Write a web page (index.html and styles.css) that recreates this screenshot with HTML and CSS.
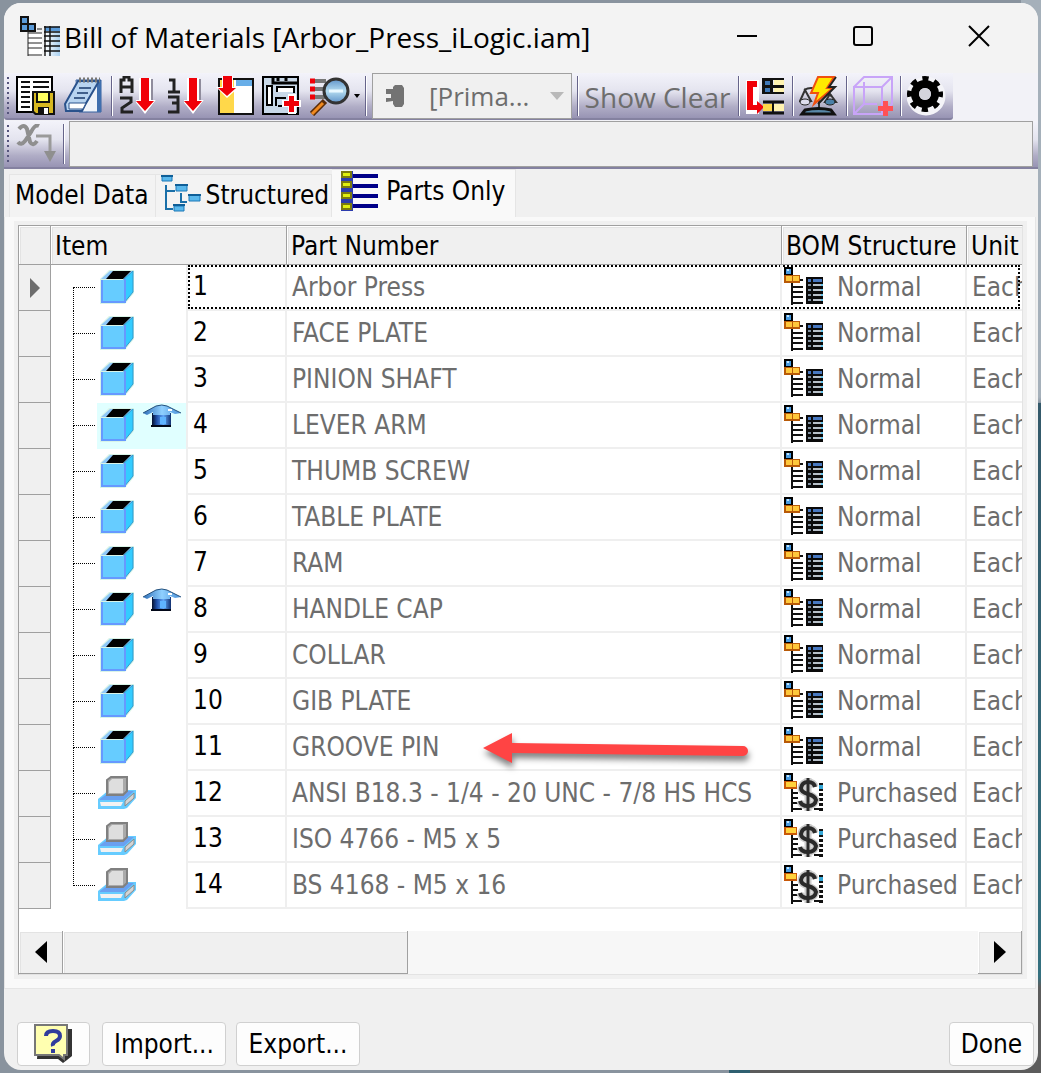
FILE: index.html
```html
<!DOCTYPE html>
<html lang="en">
<head>
<meta charset="utf-8">
<title>Bill of Materials</title>
<link rel="stylesheet" href="styles.css">
</head>
<body>
<svg class="defs" aria-hidden="true">
  <defs>
    <linearGradient id="lens" x1="0" y1="0" x2="0" y2="1"><stop offset="0" stop-color="#5f93c9"/><stop offset=".5" stop-color="#b4dcf0"/><stop offset="1" stop-color="#5f93c9"/></linearGradient>
    <linearGradient id="roof"><stop offset="0" stop-color="#2f6fb8"/><stop offset=".5" stop-color="#8fd0ff"/><stop offset="1" stop-color="#4a90d8"/></linearGradient>
    <linearGradient id="wall"><stop offset="0" stop-color="#06102c"/><stop offset=".25" stop-color="#1f4fa8"/><stop offset=".6" stop-color="#62a8f8"/><stop offset="1" stop-color="#123070"/></linearGradient>
    <linearGradient id="sheet"><stop offset="0" stop-color="#ffffff"/><stop offset="1" stop-color="#a9d0f0"/></linearGradient>
  </defs>
  <symbol id="cube" viewBox="0 0 40 40">
    <path d="M3 12 12 3H37V26L28 37H3Z" fill="#d8f4e8"/>
    <path d="M4 12 13 4H36L27 12Z" fill="#8fc8f8"/>
    <path d="M9 12 16 4H34L26 12Z" fill="#000"/>
    <path d="M27 12 36 4V25L27 36Z" fill="#33ccff" stroke="#3399cc"/>
    <path d="M4 13H28V36H4Z" fill="#66ccff"/>
    <path d="M5 13V35H28V12" fill="none" stroke="#6699ff" stroke-width="2"/>
  </symbol>
  <symbol id="home" viewBox="0 0 40 26">
    <path d="M10 9H29V23H10Z" fill="url(#wall)"/>
    <path d="M9 22H29" stroke="#020818" stroke-width="2"/>
    <path d="M1 9 14 2Q20 0 25 2L39 9 33 10 28 8V11H11V8L5 11Z" fill="url(#roof)"/>
    <path d="M1 9 14 2Q20 0 25 2L39 9" fill="none" stroke="#24507c"/>
    <path d="M18 13H24V20H18Z" fill="#5fb4ff"/><path d="M26 6h4" stroke="#fff" stroke-width="2"/>
  </symbol>
  <symbol id="library" viewBox="0 0 40 40">
    <path d="M1 26 12 17H39V25L30 35 27 36H1Z" fill="#66ccff"/>
    <path d="M3 26 14 18H37L27 27H3Z" fill="#6aa0f0"/>
    <path d="M3 29H26L24 33H4Z" fill="#f2f2f2"/>
    <path d="M28 28 37 20V25L28 33Z" fill="#d4d4d4" stroke="#8a8a8a"/>
    <path d="M10 7 14 4H30V18L26 22H10Z" fill="#aaa" stroke="#808080" stroke-width="2"/>
    <path d="M12 9 15 6H26V20H12Z" fill="#dedede"/>
  </symbol>
  <symbol id="normal" viewBox="0 0 40 40">
    <path d="M0 0H9V9H0Z" fill="#000"/><path d="M2 2H7V7H2Z" fill="#4a9be0"/><path d="M3 2h2v2h-2z" fill="#bfe4ff"/>
    <path d="M0 8H16V16H0Z" fill="#b85a08"/><path d="M2 9H8V14H2ZM9 9H15V14H9Z" fill="#ffc83c"/>
    <path d="M8 16V38M8 20H19M8 25H19M8 30H19M8 36H19M16 13h3" stroke="#111" stroke-width="2"/>
    <path d="M22 10H39V37H22Z" fill="#0a0a0a"/>
    <path d="M24 12H27V15H24ZM29 12H38V15H29Z" fill="#4878c0"/>
    <path d="M29 17h10v2h-10zM29 22h10v2h-10zM29 27h10v2h-10zM29 32h10v2h-10z" fill="#b8c0c8"/>
    <path d="M24 17h3v2h-3zM24 22h3v2h-3zM24 27h3v2h-3zM24 32h3v2h-3z" fill="#8090a0"/>
    <path d="M37 17h2v2h-2zM37 22h2v2h-2zM37 27h2v2h-2zM37 32h2v2h-2z" fill="#62c0e8"/>
  </symbol>
  <symbol id="purchased" viewBox="0 0 40 40">
    <path d="M0 0H9V9H0Z" fill="#000"/><path d="M2 2H7V7H2Z" fill="#4a9be0"/><path d="M3 2h2v2h-2z" fill="#bfe4ff"/>
    <path d="M0 8H13V16H0Z" fill="#c85808"/><path d="M2 9H12V14H2Z" fill="#ffd23c"/>
    <path d="M8 16V39M8 20h6M8 25h6M8 30h6M8 36H18M30 36h9" stroke="#111" stroke-width="2"/>
    <path d="M37 10V38" stroke="#111" stroke-width="4" stroke-dasharray="3 2"/><path d="M35 12h4v4h-4z" fill="#35a8d8"/>
    <path d="M31 14Q30 9 24 9T17 15Q17 19 24 21T32 27Q31 33 24 33T16 28M24 5V38" fill="none" stroke="#ccc" stroke-width="7"/>
    <path d="M31 14Q30 9 24 9T17 15Q17 19 24 21T32 27Q31 33 24 33T16 28" fill="none" stroke="#2a2a2a" stroke-width="4"/>
    <path d="M24 5V38" stroke="#2a2a2a" stroke-width="3"/>
  </symbol>
  <symbol id="down" viewBox="0 0 20 38"><path d="M9 3H17V24H20L11 36" fill="#8f8c9c"/><path d="M3 2H15V24H20L9 38-2 24H3Z" fill="#fff"/><path d="M5 2H13V25H18L9 35 0 25H5Z" fill="#f00008"/></symbol>
</svg>
<main class="window">
  <header class="titlebar">
    <svg class="icon" viewBox="0 0 40 40" aria-hidden="true">
      <path d="M1 1H8V8H15V15H1Z" fill="#5a9ad8" stroke="#111" stroke-width="2"/><path d="M1 8H8V15" fill="none" stroke="#111" stroke-width="2"/>
      <path d="M8 17H22V40H8Z" fill="#fff"/><path d="M8 15V40M8 17H22M8 22H22M8 27H22M8 32H22M8 39H22M17 13h5" stroke="#222" stroke-width="1"/>
      <path d="M25 10H40V40H25Z" fill="url(#sheet)"/><path d="M25 11H40V15H25Z" fill="#5a9ad8"/>
      <path d="M25 10V40M30 10V40M24 11H40M24 16H40M24 20H40M24 25H40M24 30H40M24 35H40" stroke="#111" stroke-width="1.4"/>
    </svg>
    <h1 class="title">Bill of Materials [Arbor_Press_iLogic.iam]</h1>
    <button class="caption" aria-label="Minimize"><svg viewBox="0 0 22 22"><path d="M1 11H21" stroke="#000" stroke-width="2"/></svg></button>
    <button class="caption" aria-label="Maximize"><svg viewBox="0 0 22 22"><rect x="2" y="2" width="18" height="18" rx="2" fill="none" stroke="#000" stroke-width="2"/></svg></button>
    <button class="caption" aria-label="Close"><svg viewBox="0 0 22 22"><path d="M1 1 21 21M21 1 1 21" stroke="#000" stroke-width="2"/></svg></button>
  </header>

  <div class="toolbar-row">
    <div class="toolbar" role="toolbar" aria-label="Bill of materials">
      <span class="grip"></span>
      <button class="tool" aria-label="Save"><svg viewBox="0 0 40 40">
        <path d="M1 1H36V36H1Z" fill="#fff" stroke="#000" stroke-width="2"/>
        <path d="M5 6H14M5 11H14M5 16H14M5 21H14M5 26H14M5 31H14M17 6H33M17 11H33" stroke="#111" stroke-width="2"/>
        <path d="M16 15H39V39H19L16 36Z" fill="#111"/><path d="M18 17H37V37H20L18 35Z" fill="#d8b820"/><path d="M21 16H33V26H21Z" fill="#ffff60" stroke="#111" stroke-width="2"/><path d="M22 31H33V39H22Z" fill="#111"/><path d="M28 32h4v6h-4z" fill="#fff"/>
      </svg></button>
      <button class="tool" aria-label="Notes"><svg viewBox="0 0 40 40">
        <path d="M12 4H37V36H15Z" fill="#f0f4fa" stroke="#3560a0"/><path d="M33 4H37V36H33Z" fill="#3f6fae"/>
        <path d="M14 5H35L21 29 18 35H2L1 28Z" fill="#b8d4f0" stroke="#2a528c" stroke-width="2"/><path d="M5 27H22L19 33H5Z" fill="#fff" stroke="#2a528c"/>
        <path d="M15 12H27M13 17H24M10 22H21" stroke="#40608c" stroke-width="2"/><path d="M15 4H36" stroke="#777" stroke-width="5" stroke-dasharray="2 2"/>
      </svg></button>
      <span class="sep"></span>
      <button class="tool" aria-label="Sort"><svg viewBox="0 0 40 40">
        <path d="M3 17V4H6V1H11V4H14V17M3 11H14M2 22H13V26L4 32V36H15" fill="none" stroke="#222" stroke-width="3"/><use href="#down" x="18" width="20" height="38"/>
      </svg></button>
      <button class="tool" aria-label="Renumber items"><svg viewBox="0 0 40 40">
        <path d="M3 4H8V16M2 16H14M2 21H12V27H6M12 27V36H2" fill="none" stroke="#222" stroke-width="3"/><use href="#down" x="18" width="20" height="38"/>
      </svg></button>
      <button class="tool" aria-label="Add column"><svg viewBox="0 0 40 40">
        <path d="M5 3H39V38H5Z" fill="#fff" stroke="#111" stroke-width="2"/><path d="M6 4H20V37H6Z" fill="#ffd84a"/><path d="M22 4H38V10H22Z" fill="#68aee8"/>
        <path d="M8 0H19V11H25L13 22 2 11H8Z" fill="#fff"/><path d="M9 0H18V12H22L13 20 4 12H9Z" fill="#f00008"/>
      </svg></button>
      <button class="tool" aria-label="Add custom property"><svg viewBox="0 0 40 40">
        <path d="M1 1H36V38H1Z" fill="#c8d8e8" stroke="#000" stroke-width="2"/><path d="M11 1V7H36M16 1V5M24 1V5" fill="none" stroke="#000" stroke-width="3"/>
        <path d="M5 10H10V29H5Z" fill="#fff" stroke="#000" stroke-width="2"/><path d="M15 16V11H32V17M14 30V22H24M16 30H22" fill="none" stroke="#000" stroke-width="2"/><path d="M16 12H31V16H16Z" fill="#fff"/>
        <path d="M26 18H34V24H39V31H34V38H26V31H20V24H26Z" fill="#fff"/><path d="M27 20H32V25H37V30H32V36H27V30H22V25H27Z" fill="#f00008"/>
      </svg></button>
      <button class="tool" aria-label="Find"><svg viewBox="0 0 40 40">
        <path d="M4 5H16M4 13H14M4 21H16" stroke="#777" stroke-width="4"/><path d="M0 5H5M0 13H5M0 21H5" stroke="#f00008" stroke-width="5"/>
        <path d="M15 25 2 38" stroke="#5a2c08" stroke-width="6"/><path d="M13 27 2 38" stroke="#f08a20" stroke-width="3"/>
        <circle cx="26" cy="15" r="12" fill="url(#lens)" stroke="#333" stroke-width="3"/><path d="M19 15h14" stroke="#e8f8ff" stroke-width="3"/>
      </svg></button>
      <span class="drop-mark"><svg viewBox="0 0 6 4"><path d="M0 0H6L3 4Z"/></svg></span>
      <span class="sep"></span>
      <label class="combo">
        <svg class="combo-icon" viewBox="0 0 20 24" aria-hidden="true"><path d="M8 3 10 1H17L19 4V20L17 23H10L8 20V17L1 18V14H6V10H1V5H8Z" fill="#737373"/></svg>
        <select class="combo-box" disabled aria-label="Model state"><option>[Prima...</option></select>
        <svg class="combo-mark" viewBox="0 0 14 8" aria-hidden="true"><path d="M0 0H14L7 8Z" fill="#b9b9b9"/></svg>
      </label>
      <span class="sep"></span>
      <button class="text-tool" disabled>Show Clear</button>
      <span class="sep"></span>
      <button class="tool" aria-label="Part merge"><svg viewBox="0 0 40 40">
        <path d="M1 4H14V38H1Z" fill="#fff"/><path d="M2 5H12V11H8V29H12V25L19 31 12 38V34H2Z" fill="#f00008"/>
        <path d="M17 2H39V4H28V9H39V12H28V16H39V18H17Z" fill="#111"/><path d="M20 5H25V9H20ZM20 12H25V16H20Z" fill="#3f78b8"/><path d="M29 4H39V9H29ZM29 12H39V16H29Z" fill="#fff3b0"/>
        <path d="M18 26H39M18 37H39" stroke="#111" stroke-width="3"/><path d="M18 28H27V35H18Z" fill="#ffd84a"/><path d="M29 28H39V35H29Z" fill="#fff3b0"/><path d="M28 26V37" stroke="#111" stroke-width="2"/>
      </svg></button>
      <span class="sep"></span>
      <button class="tool" aria-label="Update mass properties"><svg viewBox="0 0 40 40">
        <path d="M20 12V33M5 14Q12 10 20 14T33 20" fill="none" stroke="#333" stroke-width="2"/>
        <path d="M6 14 1 25H12ZM31 18 26 26H37Z" fill="none" stroke="#333" stroke-width="2"/><ellipse cx="6" cy="26" rx="5" ry="3" fill="#dde" stroke="#222"/><ellipse cx="31" cy="26" rx="5" ry="3" fill="#4a80a8" stroke="#222"/>
        <path d="M3 38 6 34Q20 31 32 34L35 38Z" fill="#5888a8" stroke="#111" stroke-width="3"/>
        <path d="M19 1H35L28 12H34L15 28 19 17H12Z" fill="#ffe800" stroke="#f05010" stroke-width="2"/><path d="M37 1 30 11H36L19 28" fill="none" stroke="#222" stroke-width="2"/>
      </svg></button>
      <span class="sep"></span>
      <button class="tool" aria-label="Add virtual component"><svg viewBox="0 0 40 40" fill="none" stroke="#c8a4f8" stroke-width="2">
        <path d="M1 11H29V38H1ZM1 11 11 1H39V28L29 38M29 11 39 1M11 6V28H24M11 28 1 38"/><path d="M30 25H35V30H40V35H35V40H30V35H25V30H30Z" fill="#ff5055" stroke="none"/>
      </svg></button>
      <span class="sep"></span>
      <button class="tool" aria-label="Settings"><svg viewBox="0 0 40 40">
        <circle cx="19" cy="20" r="15" fill="none" stroke="#f4f4f8" stroke-width="9"/>
        <circle cx="18" cy="18" r="15" fill="none" stroke="#000" stroke-width="6" stroke-dasharray="6 5.78" stroke-dashoffset="3"/><circle cx="18" cy="18" r="10" fill="none" stroke="#000" stroke-width="8"/><circle cx="18" cy="18" r="6" fill="#d4d4dc"/>
      </svg></button>
    </div>
  </div>

  <div class="formula-row">
    <span class="grip"></span>
    <button class="tool" disabled aria-label="Export parameter"><svg viewBox="0 0 40 40"><path d="M3 5Q8 -1 11 5L14 18Q17 23 21 17M23 2Q19 0 15 8L9 17Q5 22 2 18" fill="none" stroke="#8f8f8f" stroke-width="4"/><path d="M20 12H34V28" fill="none" stroke="#9a9a9a" stroke-width="3"/><path d="M28 27H40L34 38Z" fill="#8f8f8f"/></svg></button>
    <span class="sep"></span>
    <input class="formula" type="text" disabled aria-label="Expression">
  </div>

  <nav class="tabs" role="tablist">
    <button class="tab" role="tab">Model Data</button>
    <button class="tab" role="tab"><svg class="tab-icon" viewBox="0 0 40 40" aria-hidden="true"><path d="M5 10V34H12M5 16H14M20 18V27H26" fill="none" stroke="#1a6fa8" stroke-width="2"/><g fill="#5ab8ec" stroke="#1a78b8" stroke-width="1"><path d="M1 1H11V6H1ZM15 10H26V16H15ZM28 20H39V26H28ZM13 31H23V36H13Z"/></g><path d="M0 1H12M14 10H27M27 20H40M12 30H24" stroke="#0f5f98" stroke-width="2"/></svg>Structured</button>
    <button class="tab tab-active" role="tab" aria-selected="true"><svg class="tab-icon" viewBox="0 0 40 40" aria-hidden="true"><path d="M0 0H12V40H0Z" fill="#2c3cae"/><g fill="#e0f010" stroke="#7a7a10" stroke-width="2"><path d="M1 1H10V6H1ZM1 11H10V16H1ZM1 22H10V27H1ZM1 33H10V38H1Z"/></g><path d="M12 5H37M12 15H37M12 25H37M12 35H37" stroke="#000088" stroke-width="4"/></svg>Parts Only</button>
  </nav>

  <section class="pane">
    <div class="grid">
      <table class="bom">
        <colgroup><col class="c-mark"><col class="c-tree"><col class="c-item"><col class="c-part"><col class="c-bom"><col class="c-unit"></colgroup>
        <thead><tr><th></th><th colspan="2">Item</th><th>Part Number</th><th>BOM Structure</th><th>Unit</th></tr></thead>
        <tbody id="rows"></tbody>
      </table>
      <div class="scrollbar">
        <button class="scroll-end" aria-label="Scroll left"><svg viewBox="0 0 12 22"><path d="M12 0V22L0 11Z"/></svg></button>
        <span class="thumb"></span>
        <button class="scroll-end" aria-label="Scroll right"><svg viewBox="0 0 12 22"><path d="M0 0V22L12 11Z"/></svg></button>
      </div>
    </div>
  </section>

  <footer class="footer">
    <button class="btn btn-help" aria-label="Help"><svg class="icon" viewBox="0 0 40 40"><path d="M5 5H38V32L33 36 29 39 24 35H3Z" fill="#333"/><path d="M1 1H33V31H30V35L25 31H1Z" fill="#ffffb0" stroke="#777" stroke-width="2"/><path d="M12 12Q12 7 19 7T26 12Q26 15 22 17T19 22M19 25V29" fill="none" stroke="#303c9c" stroke-width="4"/></svg></button>
    <button class="btn btn-wide">Import...</button>
    <button class="btn btn-wide">Export...</button>
    <button class="btn btn-done">Done</button>
  </footer>
</main>
<script src="rows.js"></script>
</body>
</html>
```
FILE: rows.js
```js
const parts = [
  ["Arbor Press"], ["FACE PLATE"], ["PINION SHAFT"], ["LEVER ARM", "home lit"], ["THUMB SCREW"],
  ["TABLE PLATE"], ["RAM"], ["HANDLE CAP", "home"], ["COLLAR"], ["GIB PLATE"], ["GROOVE PIN", "arrow"],
  ["ANSI B18.3 - 1/4 - 20 UNC - 7/8 HS HCS", "bought"], ["ISO 4766 - M5 x 5", "bought"], ["BS 4168 - M5 x 16", "bought"]
];
const arrow = '<svg class="arrow" viewBox="0 0 274 46" aria-hidden="true"><path d="M4 23 33 8V18L264 21A5 5 0 0 1 264 31L33 28V38Z" fill="#ff4444"/></svg>';
document.getElementById("rows").innerHTML = parts.map(([name, flags = ""], i) => {
  const has = f => flags.includes(f);
  return `<tr>
    <th class="mark" scope="row">${i ? "" : '<svg class="current" viewBox="0 0 10 20"><path d="M0 0 10 10 0 20Z"/></svg>'}</th>
    <td class="tree"><div class="node"><span class="branch"></span><span class="glyphs${has("lit") ? " lit" : ""}"><svg class="icon"><use href="#${has("bought") ? "library" : "cube"}"/></svg>${has("home") ? '<svg class="home"><use href="#home"/></svg>' : ""}</span></div></td>
    <td class="num">${i ? "" : '<span class="focus"></span>'}${i + 1}</td>
    <td class="part">${name}${has("arrow") ? arrow : ""}</td>
    <td class="structure"><div class="kind"><svg class="icon"><use href="#${has("bought") ? "purchased" : "normal"}"/></svg>${has("bought") ? "Purchased" : "Normal"}</div></td>
    <td class="unit">Each</td></tr>`;
}).join("");
```
FILE: styles.css
```css
* { box-sizing: border-box; }
body {
  margin: 0;
  min-height: 100vh;
  padding: 3px 3px 3px 4px;
  display: flex;
  background:
    linear-gradient(to right, transparent 70%, #2f5f70 70%, #2f5f70 72%, #5c5c5c 72%) bottom / 100% 3px no-repeat,
    linear-gradient(#a5b0ba 37%, #8d99a5 37.5%, #34596a 37.6%, #34707f 91%, #5c5c5c 92%) right / 20px 100% no-repeat,
    #89939e;
  color: #000;
  font: 26px/32px "DejaVu Sans Condensed", "Noto Sans", sans-serif;
}
.defs { position: absolute; width: 0; height: 0; }
button, input, select { font: inherit; color: inherit; margin: 0; padding: 0; border: 0; background: none; }
.icon { width: 40px; height: 40px; display: block; flex: none; }

.window { flex: 1; min-width: 0; display: flex; flex-direction: column; background: #f0f0f0; border-radius: 17px; overflow: hidden; }
.titlebar { display: flex; align-items: center; height: 70px; padding: 0 1px 4px 16px; background: #f3f3f3; }
.title { flex: 1; min-width: 0; margin: 0; padding: 2px 0 0 4px; font: 28px/36px "Open Sans", sans-serif; white-space: nowrap; }
.caption { width: 116px; height: 60px; display: grid; place-items: center; flex: none; }
.caption svg { width: 22px; height: 22px; }

.toolbar-row { display: flex; background: #f2f2f7; height: 48px; }
.toolbar, .formula-row { display: flex; align-items: center; background: linear-gradient(#f3f3fa, #e4e4ef 40%, #b0adc6 75%, #9894b4); border-bottom: 2px solid #8481a0; }
.toolbar { height: 47px; padding-right: 2px; border-radius: 0 0 3px 3px; }
.grip { width: 2px; height: 38px; margin: 0 3px; background: repeating-linear-gradient(#55557c 0 2px, transparent 2px 5px); }
.tool { width: 40px; height: 40px; margin: 0 4px; flex: none; }
.tool svg { width: 40px; height: 40px; display: block; }
.sep { width: 2px; height: 40px; margin: 0 1px 0 3px; flex: none; border-left: 1px solid #66648a; background: #fff; }
.drop-mark { width: 8px; display: flex; }
.drop-mark svg { width: 6px; height: 4px; }
.combo { width: 200px; height: 46px; margin: 0 2px 0 4px; padding: 0 7px 0 12px; display: flex; align-items: center; background: #f0f0f0; border: 1px solid #a0a0a0; color: #6d6d6d; }
.combo-icon { width: 20px; height: 24px; flex: none; }
.combo-box { flex: 1; min-width: 0; margin-left: 24px; appearance: none; opacity: 1; font: 26px/36px "Open Sans", sans-serif; }
.combo-mark { width: 14px; height: 8px; }
.text-tool { width: 155px; padding-top: 2px; color: #6d6d6d; font: 28px/36px "Open Sans", sans-serif; white-space: nowrap; }
.formula-row { height: 48px; padding-right: 5px; }
.formula { flex: 1; min-width: 0; height: 46px; margin-left: 3px; background: #f0f0f0; border: 1px solid #a0a0a0; }

.tabs { display: flex; align-items: flex-end; height: 48px; padding-left: 5px; }
.tab { display: flex; align-items: center; height: 43px; background: #f3f3f3; border: 1px solid #e5e5e5; border-bottom: 0; white-space: nowrap; padding: 0 6px 2px 5px; }
.tab + .tab { border-left: 0; padding-right: 2px; }
.tab-icon { width: 40px; height: 40px; margin-right: 5px; }
.tab.tab-active { height: 48px; background: #f9f9f9; padding: 0 10px 6px 9px; }

.pane { padding: 8px 13px 13px; margin-right: 2px; background: #f9f9f9; border: 1px solid #e5e5e5; border-top: 0; }
.grid { margin-right: -1px; border: 1px solid #a0a0a0; border-right-color: #e3e3e3; border-bottom-color: #e3e3e3; outline: 4px solid #f0f0f0; background: #fff; overflow: hidden; }
.bom { width: 100%; table-layout: fixed; border-collapse: separate; border-spacing: 0; white-space: nowrap; }
.c-mark { width: 32px; } .c-tree { width: 137px; } .c-item { width: 99px; } .c-bom { width: 185px; } .c-unit { width: 55px; }
.bom thead th { height: 39px; padding: 2px 0 0 4px; text-align: left; font-weight: 400; overflow: hidden; background: #f0f0f0; border: 1px solid #a0a0a0; border-width: 0 1px 1px 0; box-shadow: inset 1px 1px #fff, inset 2px 2px #e3e3e3; }
.bom thead th:last-child { border-right: 0; }
.bom td { height: 46px; padding: 0 0 0 5px; border: solid #efefef; border-width: 0 2px 2px 0; color: #6d6d6d; overflow: hidden; }
.bom .mark { padding: 0 0 0 5px; background: #f0f0f0; border: solid #a0a0a0; border-width: 0 1px 1px 0; }
.current { display: block; width: 10px; height: 20px; margin-left: 6px; fill: #6d6d6d; }
.bom .tree { padding: 0; border-bottom: 0; }
.bom .num { padding-bottom: 2px; color: #000; }
.bom .unit { border-right: 0; text-overflow: clip; }
.bom .structure { padding-left: 2px; }
.node { display: flex; height: 46px; }
.branch { width: 22px; margin: 0 2px 0 22px; display: grid; grid-template-rows: 23px 23px; flex: none; }
.branch::before { content: ""; border: dotted #000; border-width: 0 0 1px 1px; }
.branch::after { content: ""; border-left: 1px dotted #000; }
tr:first-child .branch::before, tr:last-child .branch::after { border-left: 0; }
.glyphs { flex: 1; display: flex; align-items: center; padding-bottom: 2px; }
.glyphs .home { width: 40px; height: 26px; margin: 0 0 16px 5px; }
.lit { background: #e0ffff; }
.kind { display: flex; align-items: center; gap: 13px; }
.bom tbody tr { position: relative; }
.focus { position: absolute; left: 169px; right: 2px; top: 0; height: 44px; border: 2px dotted #000; }
.bom .part { position: relative; overflow: visible; }
.arrow { position: absolute; left: 192px; top: 0; width: 274px; height: 46px; overflow: visible; filter: drop-shadow(1px 5px 3px rgba(0, 0, 0, .5)); }

.scrollbar { display: flex; height: 43px; margin-top: 22px; background: #f7f7f7; }
.scroll-end, .thumb { background: #f0f0f0; border: solid #a0a0a0; border-width: 0 1px 1px 0; box-shadow: inset 1px 1px #fff, inset 2px 2px #e3e3e3; }
.scroll-end { width: 44px; display: grid; place-items: center; }
.scroll-end svg { width: 12px; height: 22px; }
.scroll-end:last-child { margin-left: auto; }
.thumb { width: 36%; max-width: 345px; }

.footer { display: flex; align-items: center; gap: 10px; margin-top: auto; padding: 0 4px 4px 13px; }
.btn { height: 44px; background: #fdfdfd; border: 1px solid #d0d0d0; border-radius: 4px; white-space: nowrap; }
.btn-help { width: 73px; display: grid; place-items: center; margin-right: 2px; }
.btn-wide { width: 124px; }
.btn-done { width: 85px; margin-left: auto; }
```
